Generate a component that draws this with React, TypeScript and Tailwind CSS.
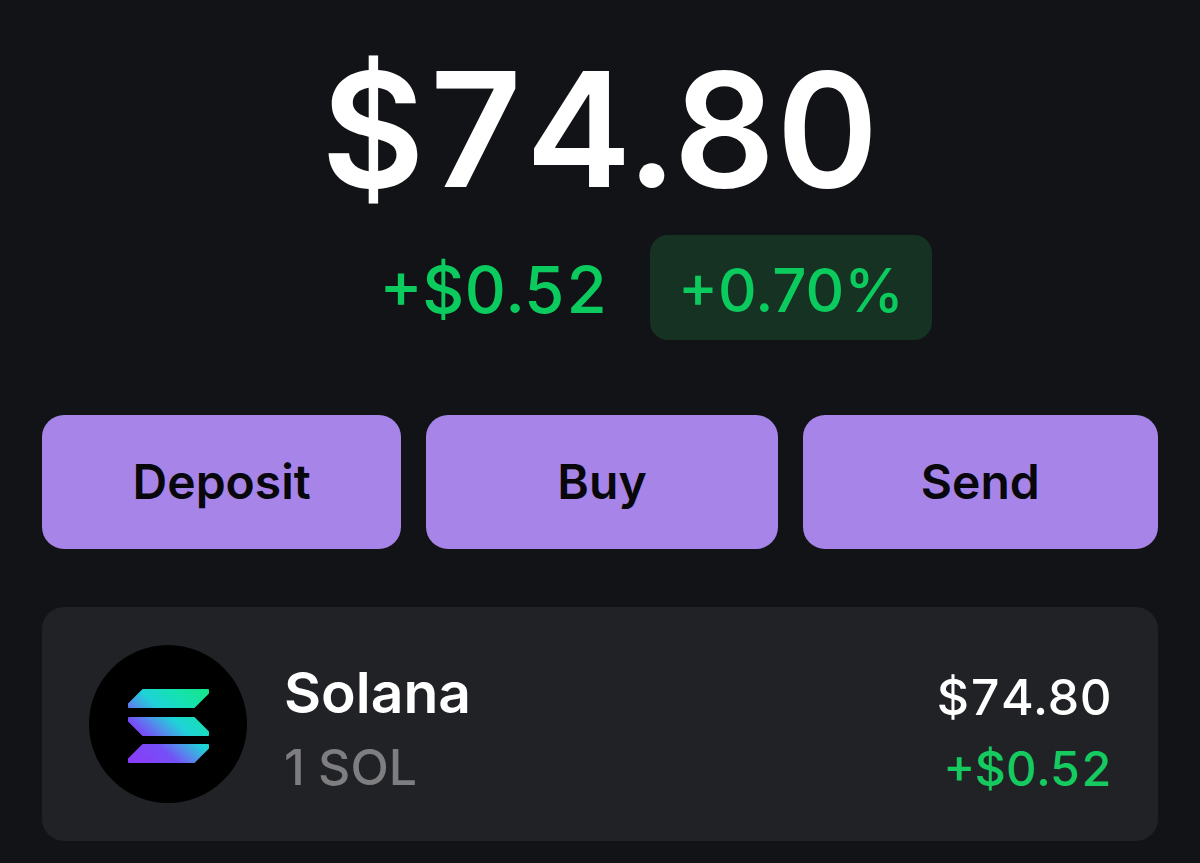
const actions = ["Deposit", "Buy", "Send"];

function SolanaLogo() {
  return (
    <svg viewBox="0 0 158 158" className="size-[158px] shrink-0" role="img" aria-label="Solana logo">
      <defs>
        <linearGradient id="sol" gradientUnits="userSpaceOnUse" x1="44" y1="116" x2="112" y2="40">
          <stop offset="0" stopColor="#8a3cf8" />
          <stop offset="0.28" stopColor="#7450f6" />
          <stop offset="0.42" stopColor="#5092ea" />
          <stop offset="0.56" stopColor="#1fd2d8" />
          <stop offset="0.78" stopColor="#14e2b0" />
          <stop offset="1" stopColor="#16e58c" />
        </linearGradient>
      </defs>
      <circle cx="79" cy="79" r="79" fill="#000" />
      <g fill="url(#sol)" stroke="url(#sol)" strokeWidth="2" strokeLinejoin="round">
        <path d="M54 45H119V48L105 62H40V59Z" />
        <path d="M40 73H105L119 87V90H54L40 76Z" />
        <path d="M54 100H119V103L105 117H40V114Z" />
      </g>
    </svg>
  );
}

export default function App() {
  return (
    <main className="min-h-screen bg-[#121317] px-[42px] pt-9 pb-[22px] font-['Inter',sans-serif] text-white">
      {/* Balance */}
      <section className="flex flex-col items-center">
        <h1 className="text-[159px] leading-[187px] font-semibold tabular-nums">$74.80</h1>
        <div className="mt-3 flex items-center gap-[42px] pl-28 font-medium text-[#0ccb5e]">
          <span className="pt-1 text-[65px] leading-[96px] tabular-nums">+$0.52</span>
          <span className="flex h-[105px] items-center rounded-[18px] bg-[#163222] px-7 pt-1 text-[60px]">
            +0.70%
          </span>
        </div>
      </section>

      {/* Actions */}
      <div className="mt-[75px] grid grid-cols-[360fr_352fr_356fr] gap-[25px]">
        {actions.map((label) => (
          <button
            key={label}
            type="button"
            className="h-[134px] rounded-[22px] bg-[#a684e8] text-[48px] font-semibold text-[#08070c]"
          >
            {label}
          </button>
        ))}
      </div>

      {/* Token */}
      <section className="mt-[58px] flex h-[234px] items-center rounded-[22px] bg-[#212226] pr-[46px] pl-[47px]">
        <SolanaLogo />
        <div className="ml-[37px] flex-1 pt-2">
          <h2 className="text-[57px] leading-[78px] font-semibold">Solana</h2>
          <p className="text-[50px] leading-[70px] font-medium text-[#7e7e81]">1 SOL</p>
        </div>
        <div className="pt-4 text-right font-medium tabular-nums">
          <p className="text-[50px] leading-[74px]">$74.80</p>
          <p className="text-[48px] leading-[70px] text-[#15cb60]">+$0.52</p>
        </div>
      </section>
    </main>
  );
}
